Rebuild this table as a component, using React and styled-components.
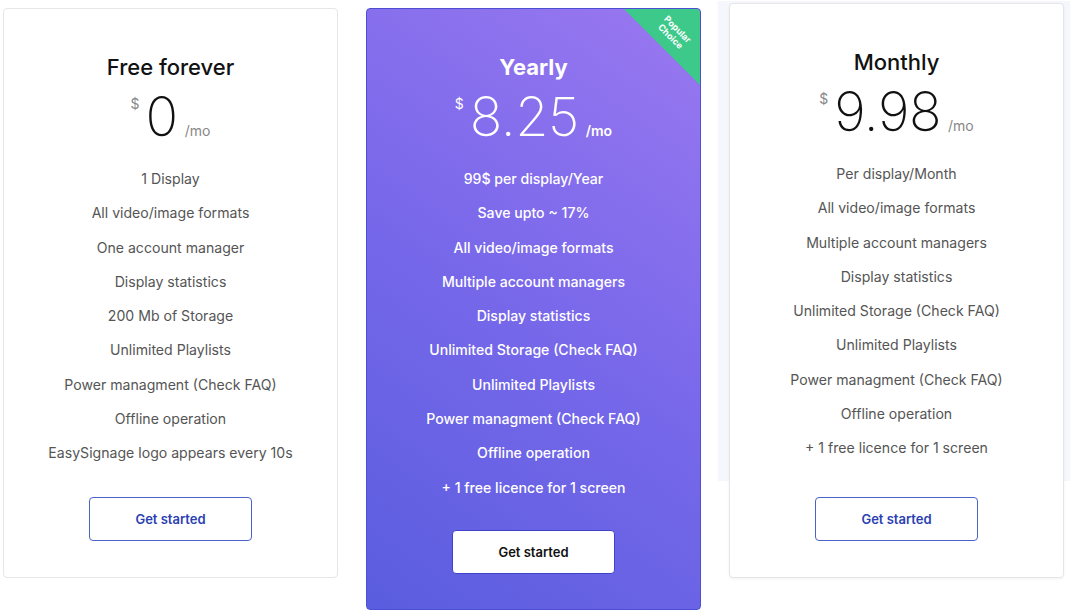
import styled, { createGlobalStyle } from "styled-components";

const GlobalStyle = createGlobalStyle`
  body {
    margin: 0;
    background: #ffffff;
    font-family: 'Inter', 'Noto Sans', sans-serif;
  }
`;

const Page = styled.div`
  display: grid;
  grid-template-columns: repeat(3, 335px);
  column-gap: 28px;
  align-items: start;
  padding: 8px 0 0 3px;
`;

const Card = styled.div`
  position: relative;
  display: flex;
  flex-direction: column;
  align-items: center;
  box-sizing: border-box;
  min-height: ${(p) => p.$height}px;
  margin-top: ${(p) => (p.$lift ? -5 : 0)}px;
  padding: 45px 20px ${(p) => (p.$featured ? 35 : 36)}px;
  border-radius: 4px;
  border: 1px solid ${(p) => (p.$featured ? "#4c4fd4" : "#e6e6ea")};
  background: ${(p) =>
    p.$featured
      ? "linear-gradient(35deg, #5a5ddf 0%, #7868ea 50%, #9a78f0 100%)"
      : "#ffffff"};
  color: ${(p) => (p.$featured ? "#ffffff" : "#111")};
  box-shadow: ${(p) => (p.$lift ? "0 1px 3px rgba(0,0,0,0.06)" : "none")};

  ${(p) =>
    p.$lift &&
    `
    &::before {
      content: "";
      position: absolute;
      top: -3px;
      left: -12px;
      right: -8px;
      height: 480px;
      background: #f6f6fd;
      z-index: -1;
    }
  `}
`;

const Ribbon = styled.div`
  position: absolute;
  top: 0;
  right: 0;
  width: 76px;
  height: 76px;
  background: #3cc98a;
  clip-path: polygon(0 0, 100% 0, 100% 100%);
  border-top-right-radius: 4px;
`;

const RibbonText = styled.span`
  position: absolute;
  top: 14px;
  right: -4px;
  width: 60px;
  transform: rotate(45deg);
  font-size: 9px;
  font-weight: 700;
  line-height: 10px;
  text-align: center;
  color: #fff;
`;

const Title = styled.h2`
  margin: 0;
  font-size: 22px;
  line-height: 26px;
  font-weight: ${(p) => (p.$featured ? 700 : 500)};
`;

const PriceRow = styled.div`
  display: flex;
  justify-content: center;
  align-items: baseline;
  margin-top: 5px;
  height: 64px;
`;

const Currency = styled.span`
  align-self: flex-start;
  margin-top: 10px;
  margin-right: 6px;
  font-size: 14px;
  color: ${(p) => (p.$featured ? "#fff" : "#888")};
`;

const Amount = styled.span`
  font-size: 54px;
  font-weight: 200;
  line-height: 64px;
  letter-spacing: -0.5px;
`;

const Per = styled.span`
  margin-left: 7px;
  font-size: 14px;
  font-weight: ${(p) => (p.$featured ? 600 : 400)};
  color: ${(p) => (p.$featured ? "#fff" : "#888")};
`;

const Features = styled.ul`
  list-style: none;
  margin: 13px 0 0;
  padding: 0;
  text-align: center;
`;

const Feature = styled.li`
  font-size: 14.1px;
  line-height: 34.3px;
  font-weight: ${(p) => (p.$featured ? 500 : 400)};
  color: ${(p) => (p.$featured ? "#fff" : "#555")};
`;

const Button = styled.button`
  margin-top: auto;
  width: 163px;
  height: 44px;
  border-radius: 4px;
  font-family: inherit;
  font-size: 13px;
  font-weight: 600;
  cursor: pointer;
  border: 1px solid ${(p) => (p.$featured ? "#3f43c9" : "#4a63c9")};
  background: #fff;
  color: ${(p) => (p.$featured ? "#111" : "#2b3fb3")};
`;

const plans = [
  {
    title: "Free forever",
    amount: "0",
    height: 570,
    features: [
      "1 Display",
      "All video/image formats",
      "One account manager",
      "Display statistics",
      "200 Mb of Storage",
      "Unlimited Playlists",
      "Power managment (Check FAQ)",
      "Offline operation",
      "EasySignage logo appears every 10s",
    ],
  },
  {
    title: "Yearly",
    amount: "8.25",
    height: 602,
    featured: true,
    features: [
      "99$ per display/Year",
      "Save upto ~ 17%",
      "All video/image formats",
      "Multiple account managers",
      "Display statistics",
      "Unlimited Storage (Check FAQ)",
      "Unlimited Playlists",
      "Power managment (Check FAQ)",
      "Offline operation",
      "+ 1 free licence for 1 screen",
    ],
  },
  {
    title: "Monthly",
    amount: "9.98",
    height: 575,
    lift: true,
    features: [
      "Per display/Month",
      "All video/image formats",
      "Multiple account managers",
      "Display statistics",
      "Unlimited Storage (Check FAQ)",
      "Unlimited Playlists",
      "Power managment (Check FAQ)",
      "Offline operation",
      "+ 1 free licence for 1 screen",
    ],
  },
];

export default function App() {
  return (
    <>
      <GlobalStyle />
      <Page>
        {plans.map((plan) => (
          <Card
            key={plan.title}
            $featured={plan.featured}
            $lift={plan.lift}
            $height={plan.height}
          >
            {plan.featured && (
              <Ribbon>
                <RibbonText>
                  Popular
                  <br />
                  Choice
                </RibbonText>
              </Ribbon>
            )}
            <Title $featured={plan.featured}>{plan.title}</Title>
            <PriceRow>
              <Currency $featured={plan.featured}>$</Currency>
              <Amount>{plan.amount}</Amount>
              <Per $featured={plan.featured}>/mo</Per>
            </PriceRow>
            <Features>
              {plan.features.map((f) => (
                <Feature key={f} $featured={plan.featured}>
                  {f}
                </Feature>
              ))}
            </Features>
            <Button $featured={plan.featured}>Get started</Button>
          </Card>
        ))}
      </Page>
    </>
  );
}
